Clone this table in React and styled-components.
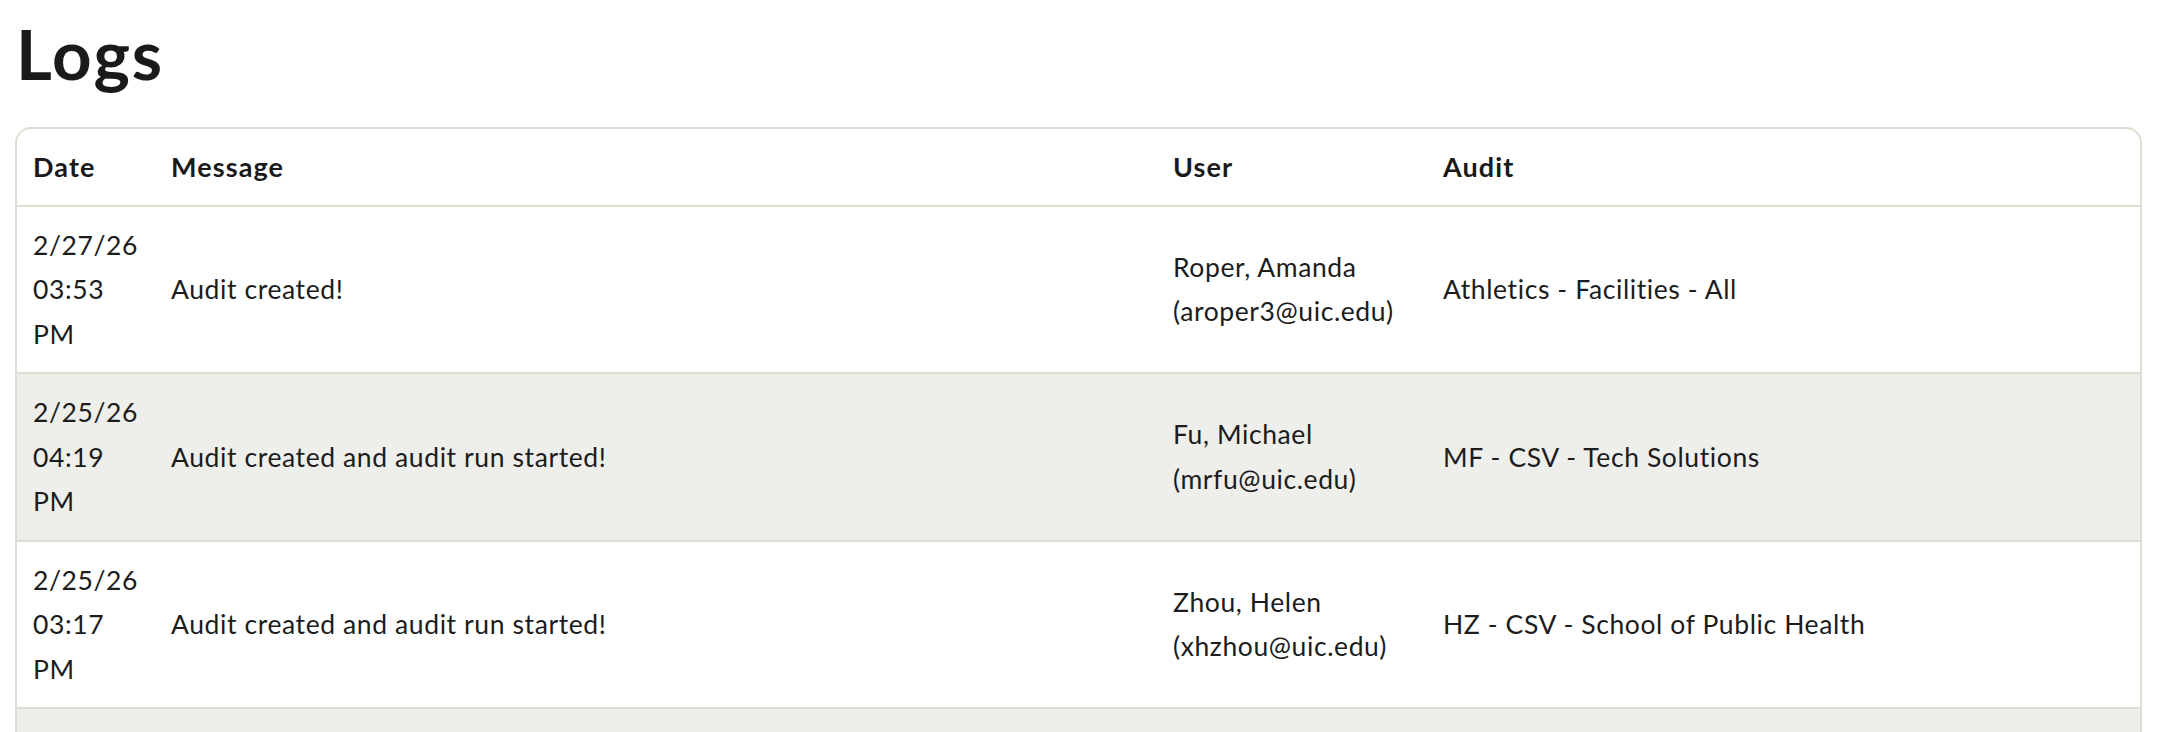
import React from 'react';
import styled, { createGlobalStyle } from 'styled-components';

const GlobalStyle = createGlobalStyle`
  body {
    margin: 0;
    background: #ffffff;
    font-family: Lato, "Open Sans", sans-serif;
    color: #1b1b1b;
  }
`;

const logs = [
  {
    date: '2/27/26',
    time: '03:53',
    ampm: 'PM',
    message: 'Audit created!',
    name: 'Roper, Amanda',
    email: 'aroper3@uic.edu',
    audit: 'Athletics - Facilities - All',
  },
  {
    date: '2/25/26',
    time: '04:19',
    ampm: 'PM',
    message: 'Audit created and audit run started!',
    name: 'Fu, Michael',
    email: 'mrfu@uic.edu',
    audit: 'MF - CSV - Tech Solutions',
  },
  {
    date: '2/25/26',
    time: '03:17',
    ampm: 'PM',
    message: 'Audit created and audit run started!',
    name: 'Zhou, Helen',
    email: 'xhzhou@uic.edu',
    audit: 'HZ - CSV - School of Public Health',
  },
  {
    date: '2/24/26',
    time: '11:02',
    ampm: 'AM',
    message: 'Audit run started!',
    name: 'Fu, Michael',
    email: 'mrfu@uic.edu',
    audit: 'MF - CSV - Tech Solutions',
  },
];

const App = () => {
  return (
    <Page>
      <GlobalStyle />
      <Title>Logs</Title>
      <TableCard>
        <Table>
          <colgroup>
            <col style={{ width: 138 }} />
            <col style={{ width: 1002 }} />
            <col style={{ width: 270 }} />
            <col />
          </colgroup>
          <thead>
            <tr>
              <HeadCell>Date</HeadCell>
              <HeadCell>Message</HeadCell>
              <HeadCell>User</HeadCell>
              <HeadCell>Audit</HeadCell>
            </tr>
          </thead>
          <tbody>
            {logs.map((log, i) => (
              <Row key={i} $striped={i % 2 === 1}>
                <Cell>
                  <Line>{log.date}</Line>
                  <Line>{log.time}</Line>
                  <Line>{log.ampm}</Line>
                </Cell>
                <Cell>{log.message}</Cell>
                <Cell>
                  <Line>{log.name}</Line>
                  <Line>({log.email})</Line>
                </Cell>
                <Cell>{log.audit}</Cell>
              </Row>
            ))}
          </tbody>
        </Table>
      </TableCard>
    </Page>
  );
};

export default App;

const Page = styled.main`
  padding: 0 16px 0 15px;
`;

const Title = styled.h1`
  margin: 0;
  padding: 14px 0 0 1px;
  height: 127px;
  box-sizing: border-box;
  font-size: 69px;
  font-weight: 700;
  line-height: 80px;
  letter-spacing: 2px;
  color: #1a1a1a;
`;

const TableCard = styled.div`
  border: 2px solid #e0dcd1;
  border-radius: 16px;
  overflow: hidden;
`;

const Table = styled.table`
  width: 100%;
  border-collapse: collapse;
  table-layout: fixed;
  font-size: 26.5px;
  line-height: 44.5px;
  letter-spacing: 0.6px;
`;

const HeadCell = styled.th`
  padding: 16px 16px 15px;
  text-align: left;
  font-size: 27px;
  font-weight: 700;
  letter-spacing: 1.1px;
  color: #1a1a1a;
`;

const Row = styled.tr`
  border-top: 2px solid #e0dcd1;
  background: ${(p) => (p.$striped ? '#eeeeea' : '#ffffff')};
`;

const Cell = styled.td`
  padding: 16px;
  vertical-align: middle;
  color: #1c1c1c;
`;

const Line = styled.span`
  display: block;
`;
